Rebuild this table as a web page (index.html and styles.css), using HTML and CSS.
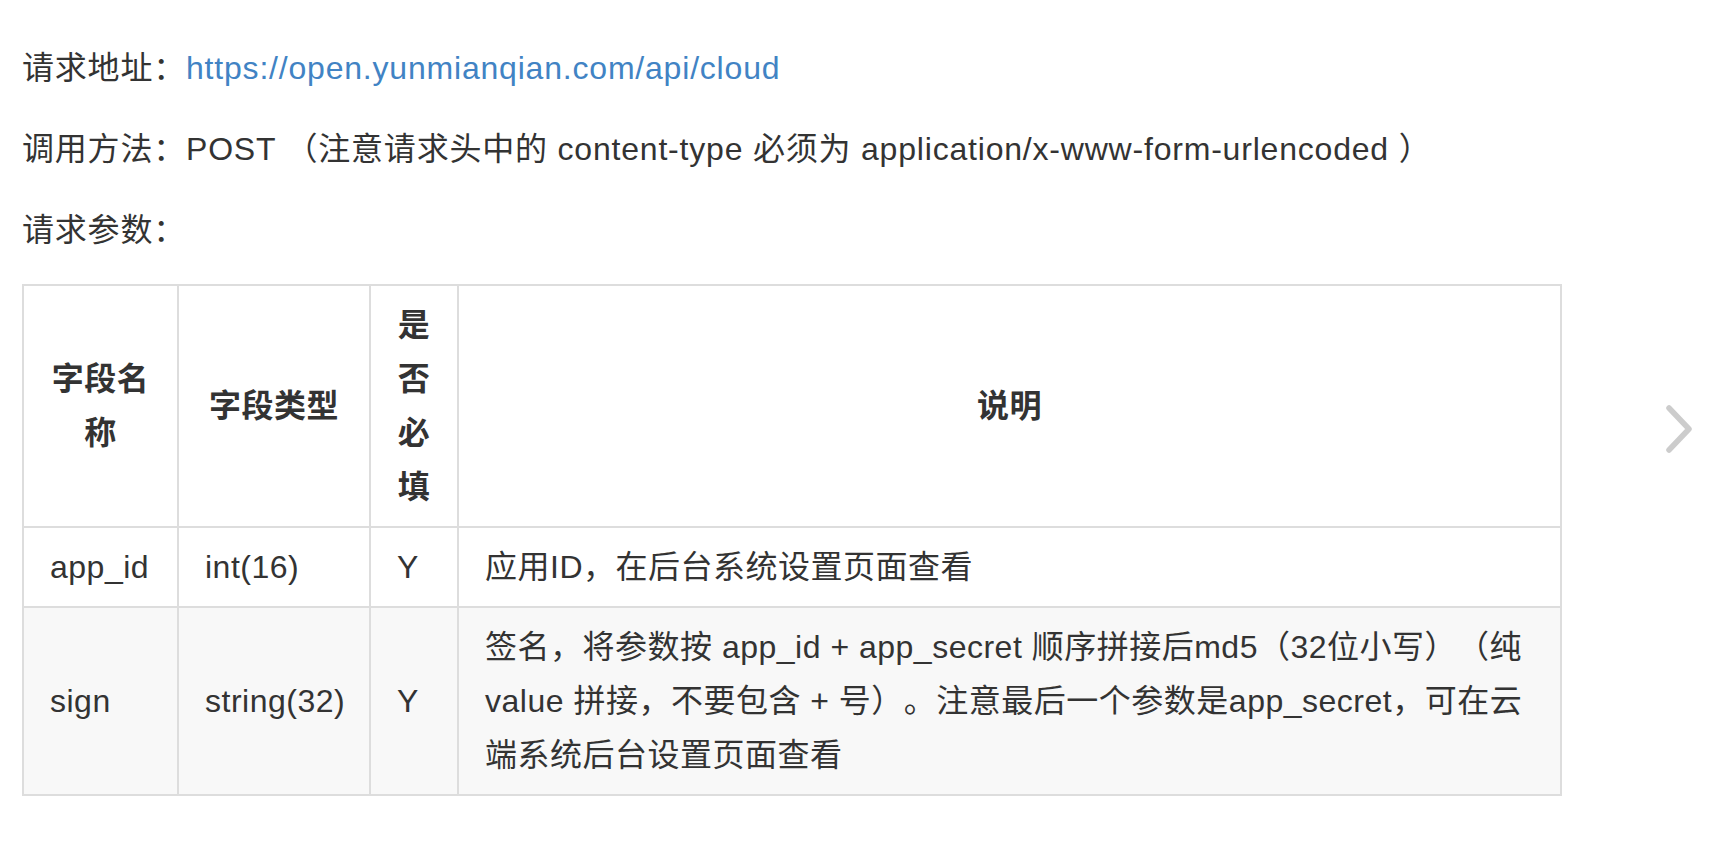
FILE: index.html
```html
<!DOCTYPE html>
<html lang="zh-CN">
<head>
 <meta charset="UTF-8">
 <title>云端接口</title>
 <link rel="stylesheet" href="styles.css">
</head>
<body>
<div class="doc">
 <p>请求地址：<a href="#">https://open.yunmianqian.com/api/cloud</a></p>
 <p>调用方法：POST （注意请求头中的 content-type 必须为 application/x-www-form-urlencoded ）</p>
 <p>请求参数：</p>
 <table class="params">
  <colgroup>
   <col class="c-name">
   <col class="c-type">
   <col class="c-req">
   <col>
  </colgroup>
  <thead>
   <tr>
    <th>字段名称</th>
    <th>字段类型</th>
    <th>是否必填</th>
    <th>说明</th>
   </tr>
  </thead>
  <tbody>
   <tr>
    <td>app_id</td>
    <td>int(16)</td>
    <td>Y</td>
    <td>应用ID，在后台系统设置页面查看</td>
   </tr>
   <tr>
    <td>sign</td>
    <td>string(32)</td>
    <td>Y</td>
    <td>签名，将参数按 app_id + app_secret 顺序拼接后md5（32位小写）（纯 value 拼接，不要包含 + 号）。注意最后一个参数是app_secret，可在云端系统后台设置页面查看</td>
   </tr>
  </tbody>
 </table>
</div>
<div class="next-arrow">
 <svg width="30" height="48" viewBox="0 0 30 48"><polyline points="4,3 24,24 4,45" fill="none" stroke="#cccccc" stroke-width="5.5" stroke-linecap="round" stroke-linejoin="round"/></svg>
</div>
</body>
</html>
```

FILE: styles.css
```css
* {
    margin: 0;
    padding: 0;
    box-sizing: border-box;
}
body {
    font-family: 'Liberation Sans', 'Noto Sans CJK SC', sans-serif;
    font-size: 32px;
    line-height: 54px;
    text-spacing-trim: space-all;
    color: #333333;
    background: #ffffff;
}
.doc {
    padding: 41px 22px 0 22px;
}
.doc p {
    margin-bottom: 27px;
    letter-spacing: 0.8px;
}
.doc a {
    color: #4183c4;
    text-decoration: none;
}
.params {
    width: 1540px;
    border-collapse: collapse;
    table-layout: fixed;
    letter-spacing: 0.5px;
}
.c-name { width: 155px; }
.c-type { width: 192px; }
.c-req { width: 88px; }
.params th,
.params td {
    border: 2px solid #dddddd;
    padding: 12px 26px;
    vertical-align: middle;
}
.params th {
    font-weight: bold;
    text-align: center;
}
.params td {
    text-align: left;
}
.params tbody tr:nth-child(2n) {
    background: #f8f8f8;
}
.next-arrow {
    position: absolute;
    left: 1665px;
    top: 405px;
}
```
